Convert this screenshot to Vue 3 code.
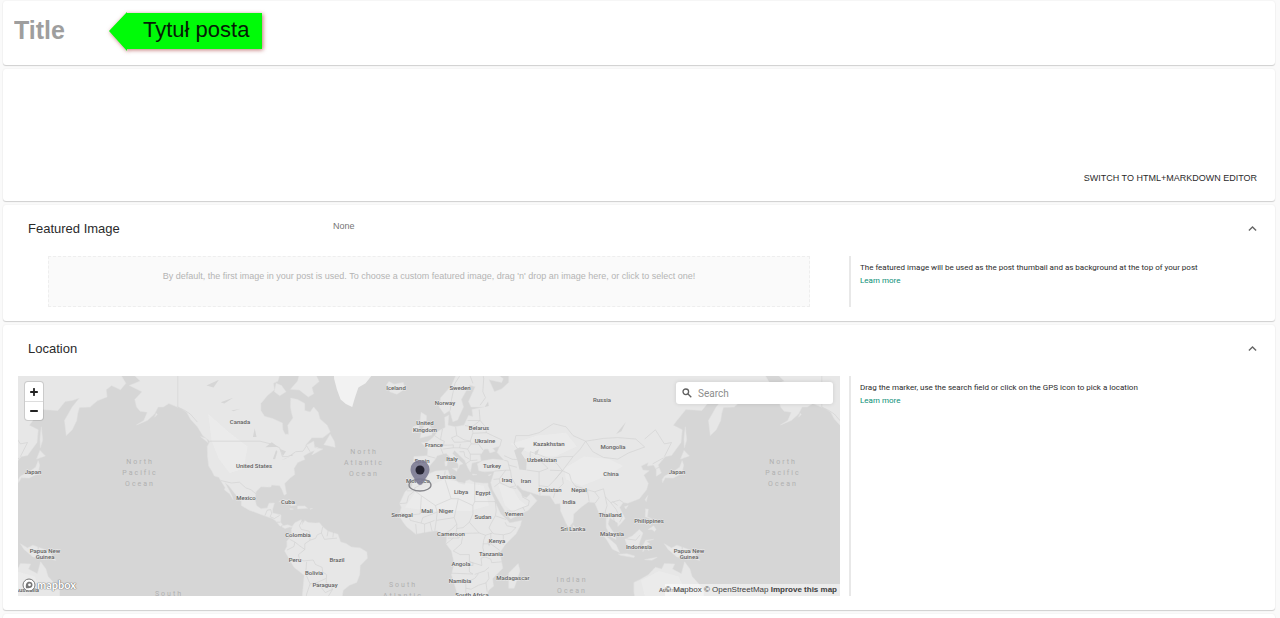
<script setup>
import { ref } from 'vue'

const title = ref('')
const query = ref('')

// Web Mercator: 644 units for 360 degrees, viewBox origin at the map's top-left corner
const px = (lon) => 412 + lon * 1.789
const py = (lat) => 166 - 102.5 * Math.log(Math.tan(Math.PI / 4 + (lat * Math.PI) / 360))
const toPath = (s, close) =>
  'M' + s.trim().split(/\s+/).map((p) => {
    const [lon, lat] = p.split(',').map(Number)
    return px(lon).toFixed(1) + ' ' + py(lat).toFixed(1)
  }).join('L') + (close ? 'Z' : '')

const land = [
  '-162,72 -166,68 -162,66.5 -168,65.5 -161,64 -165,62 -164,60 -162,58.8 -158,58.5 -160,56 -164,54.6 -158,56 -154,58 -152,60 -149,60 -146,61 -139,59.5 -136,58.5 -134,56.5 -130,54 -127,51 -123,49 -124.5,47 -124.3,43 -123.7,39 -122,37 -120.5,34.6 -118,34 -117,32.5 -114.5,29 -115,28 -112,26 -110,23 -110.7,25 -112.7,28.5 -114.7,31.5 -112.5,30 -109,26 -105.5,22 -105.5,20 -101,17.5 -96,15.8 -92.5,14.5 -88,13 -86,11.5 -84,9 -81,7.5 -78,8.5 -77.5,7.5 -76.8,8.5 -79.5,9.6 -82,9 -83.5,11 -83.3,15 -88,16 -88,18 -87,21.3 -90,21.2 -91,18.7 -94.5,18.3 -97,20 -97.8,23 -97.3,27 -94.5,29.5 -91,29.3 -89,29.3 -88.5,30.4 -84,30 -82.7,28 -81.5,25.3 -80.2,26 -81.3,31 -78,33.8 -75.6,35.3 -76,38 -74,40.5 -70,41.8 -70.7,43.3 -67,44.8 -64.5,45.5 -66,43.7 -60,46 -64.5,46.6 -65,49 -70,47.2 -66,50.2 -60,50.2 -55.8,52.2 -57.5,54.5 -61.5,56.5 -62.5,58.5 -65,60 -67,58.6 -70,59 -70,61 -74,62 -77.8,62.4 -78,60 -77.5,58.5 -76.6,56.8 -79.5,54.5 -79,51.5 -81,51.5 -82.2,53 -82.5,55.2 -88,56.6 -92.5,57.3 -94.5,59 -94.5,61 -91,63 -87,64.5 -87.5,66 -85,66.5 -83,69 -82,72',
  '-62,66.4 -66,65 -65,63.5 -68,62.7 -73,64.4 -78,64.6 -74,66.5 -73,68 -77,70 -80,72 -68,71',
  '-80.5,64 -84,63 -87,64 -86,66 -83,65.5',
  '-59.3,47.7 -53,46.7 -53.5,49 -55.8,51.5',
  '-64,46.8 -62,46.3 -62.5,46.1',
  '-124,48.4 -128.2,50.6 -125,50',
  '-154,57 -152.5,57.8 -153,58.2',
  '-22.5,64 -18.5,63.4 -14,64.7 -15,66.2 -20,65.8 -23,66.4 -24.3,65.6 -22,65',
  '-84.5,22 -82,23.1 -77,21.8 -74.5,20.2 -77.5,19.9 -80,21.8',
  '-74,19.8 -70,19.8 -68.5,18.5 -74,18.2',
  '-78.3,18.4 -76.3,18.1 -78,17.8',
  '-67,18.4 -65.6,18.4 -67,18',
  '-77.5,8 -75.5,10.7 -72,12.3 -71.3,11 -71.6,9.5 -70,12 -68,10.8 -64,10.5 -61.8,10.7 -60,8.5 -57,6 -51.5,4.3 -50,0 -47,-.8 -44,-2.8 -39,-3.3 -35.3,-5.5 -35,-9 -39,-13 -39.3,-18 -41,-22 -45,-23.5 -48.5,-26 -49,-29 -52,-33 -56,-34.8 -62,-39 -73.5,-39 -71.5,-30 -70.3,-18.3 -76,-14 -79.5,-8 -81.3,-5 -80,-2.5 -80,.5 -77.5,3 -77.4,6',
  '-6,35.8 -2,35.1 3,36.8 10,37.3 11,35 10,34 15,32.3 16,31.2 19.5,30.5 20,32.3 22,32.8 25,31.6 30,31.2 32.5,31.2 32.5,29.8 35.5,24 37.3,20 39.5,15.5 43.2,12.2 44.5,10.6 51.2,11.9 50.5,9 48,4.5 42,-1.5 39,-6 40.7,-14.5 35,-20 35.5,-24 32.8,-26 31,-30 26,-34 20,-34.8 18,-32 15,-27 12,-18 13.5,-12 12,-5 9,-1 9.5,3.8 6,4.3 4,6.3 1,6 -4,5.2 -8,4.4 -13,8.5 -15,11 -17.3,14.7 -16,19 -17,21 -14,27 -10,30 -9.5,32.5',
  '49.3,-12 50.3,-16 47,-25 44,-25 44,-17',
  '-9,43 -1.5,43.4 -1.2,46 -4.7,48.4 -1.5,48.7 1.5,50.2 4.5,52.5 8.5,53.8 8.2,57 10.5,57.6 10,54.5 14,54 19,54.5 21.5,57.5 24,57.2 23.5,59.3 30,60 23,60 21.5,61.5 25.3,65.2 22,65.6 17.5,62 18.7,60 16.5,57.5 15.5,56.2 12.8,55.6 11,59 8,58 5.2,60 6,62.5 12,65.5 16,69 25,71 33,69.3 41,67 40,66.2 33,66.8 36,64 40,64.7 44,66.2 44,68.5 54,68.5 60,69 68,69 68,72 180,72 190,66 187,64.5 182,65.5 179,64.5 179.5,62.7 174,61.7 170,60 164,59.9 163,58 162.5,56 160,53 156.7,51 155.7,56 160,60 164,62.4 160,61.8 156,61.5 152,59 143,59.3 138,56 136,54.5 141,53 140.3,48.5 135,43.5 131.5,43 127.5,39.5 129.3,36 126.5,34.5 126.5,37.5 125,39.5 121.5,39 122,40.5 118,39 119,37.3 122.5,37 119.5,35 122,31 121,28 117,23.5 110.5,21.2 108,21.6 106,19 109,13 107,10.5 105,8.7 105,10.5 102,12.5 100.5,13.5 99.5,10 103.3,4 104,1.4 101,3 98.5,8 98.5,13 97.5,16.5 94.5,16 92,21.5 88.5,21.8 85,19.5 80.3,15.5 80,11 77.5,8 76,10.5 73,17 72.7,21 70,20.8 67,25 61.5,25.2 57,26.5 51.5,28 49,30.3 48,29.5 51,26 51.5,24.6 54,24 56.3,26 59.8,22.5 55,17.5 45,12.8 42.8,15.5 39,21.5 35,28 34,31.5 36,36.8 30.5,36.5 27.3,37 26.5,40 29,41.2 35,42 41.5,41.5 37.5,44.7 39,47.2 35,46.3 36.5,45.2 33.5,44.5 32.5,46 30.5,46 28,43.5 28.5,41.2 26,40.8 23.5,40.3 23,38 22.5,36.5 21,38.5 19.4,41.5 13.7,45.5 12.5,44.3 16,41.7 18.5,40 16.5,39.5 16,38 15.7,40 12,42 9,44.4 4,43.4 3,42 -.3,39 -2,36.8 -5.5,36.1 -9,37 -9.2,39',
  '-5.5,50.1 1,51.2 1.5,52.8 -2,56 -2,57.5 -5,58.5 -5.5,56 -3,54.5 -4.5,53 -5,51.8',
  '-10,52 -6.2,52.3 -6,54.8 -9.5,54',
  '12.5,38 15.5,38.2 15,36.7',
  '8.3,41 9.7,41 9.5,39.2 8.5,39',
  '23.7,35.5 26.2,35.2 24,35',
  '32.4,34.9 34.3,35.5 33.5,34.7',
  '130,31.5 131.5,33.8 136,33.6 140.8,35.7 141.8,39.5 141,41.3 139.5,38.5 136.5,36.8 131,34.5 129.8,33',
  '140,42 145,43.3 142,45.5',
  '142.2,46.5 143.5,49.5 142.7,54 142,50',
  '120.5,18.3 122,18 121.5,14 124,12.8 120.3,14',
  '122,7 125,9 126.4,7 125.5,5.8 124,7',
  '123,11 124.6,11.2 123,9.3',
  '120.2,23 121.7,25.1 120.9,22',
  '108.7,19.3 110.8,20 109.5,18.2',
  '80,9.5 81.8,7 80.2,6',
  '109,1.5 113,3.3 117,7 119,5 117.5,.8 116,-4 110.5,-2.8',
  '95.3,5.5 100,2 104,-1.5 106,-5.8 102,-4 98.5,1.7',
  '105.3,-6.8 110,-6.5 114.5,-7.8 114,-8.7 106.5,-7.4',
  '119,-5.5 119,-2 120.5,1 125,1.5 121,.3 123,-1 121.2,-2 122.5,-5 120.5,-3',
  '120,-9.8 127,-8.5 124,-10.2',
  '131,-1 135,-3.3 138,-1.8 145,-4.3 147.5,-6 150.8,-10.3 146,-8.8 143,-9.2 138,-8.3 133,-4',
  '148.5,-5.8 152,-4.2 151,-6.2',
  '114,-22 117,-20.7 122,-18 126,-14 129.5,-15 131,-12 136.8,-12.2 135.5,-15 140.5,-17.5 142.3,-11 145.3,-15 146.5,-19 150,-22.5 153,-26 153,-31 151,-34 147,-38 140,-38 135,-34.5 131,-31.5 124,-33 115.5,-34 114,-27'
].map((s) => toPath(s, true)).join('')

const ice = toPath('-54,71 -53.6,67 -52,64.5 -50,62 -47,60.8 -43.5,60 -42,62.5 -40,65 -36,66 -32,68 -25,70 -25,72', true)

const lakes = [
  '47,45.5 50,46.6 53,46.5 51,44.5 54,41 53.8,37.2 50,37.5 49,41',
  '58.5,45 61,46 60,44 58.7,43.7',
  '-92,46.7 -88.5,48.6 -84.8,46.8 -88,46.8',
  '-87.8,42 -86,45.7 -85.3,45 -86.6,41.9',
  '-84,46 -80.5,45.2 -82.2,43.2',
  '-83,41.6 -79,42.8 -81,42',
  '-79.5,43.3 -76.3,44 -77,43.3',
  '-99,50.5 -97,50.5 -98,53.5',
  '-117,61.3 -110,62.5 -115,61',
  '-125,65.5 -118,66.8 -121,65',
  '-111,59 -106,59.5 -110,58.8',
  '32,.3 34.2,.2 33,-2.5',
  '104,51.6 109.5,55.5 107,52.5',
  '30.5,60 32.5,61.5 32.8,60.3'
].map((s) => toPath(s, true)).join('')

const shades = [
  '-124,58 -112,52 -102,47 -104,38 -112,36 -118,42 -122,49',
  '-8,27 8,33 30,30 33,20 22,17 0,17 -14,19',
  '38,31 46,29 50,23 54,20 47,16 42,20',
  '75,38 86,43 100,42 108,39 100,35 85,30 76,33',
  '45,48 60,51 76,52 82,47 70,43 60,43',
  '118,-21 128,-16 139,-19 142,-25 132,-29 120,-29'
].map((s) => toPath(s, true)).join('')

const borders = [
  '-123,49 -95,49 -89,48 -84,46.5 -82.5,43 -79,43 -75,45 -71,45.2 -69,47.3 -67,45',
  '-141,72 -141,60 -137,59 -134,58 -130,55.5',
  '-117,32.5 -111,31.3 -106.5,31.7 -103,29 -100,28 -97.3,26',
  '-92.3,14.6 -91,17.5 -89,17.8 -88.5,15.8 -89.4,14 -87,13 -84,14.7',
  '-85.5,11 -83.7,11', '-83,8.2 -82.6,9.5',
  '-77.3,8 -77.8,7.2', '-71.5,12 -73,9 -72,7 -67.5,6 -67,1 -70,-1 -70,-4.2 -73,-2 -75.5,0 -78.5,1.5',
  '-75.5,0 -76,-2.5 -80,-4.5', '-70,-4.2 -73.5,-7 -73,-9.5 -70.5,-10.5 -65.3,-10 -64,-12.5 -60.3,-14 -60,-16.5 -57.8,-18 -58,-22 -55.5,-23.5 -54.5,-25.6 -57.5,-30 -53.5,-33.5',
  '-69,-11 -69.5,-17.5 -67,-22.8 -63,-22 -58.2,-20', '-63,-22 -58.5,-27.2 -54.6,-25.6',
  '-67,-22.8 -69,-28 -70,-34', '-67,1 -64,2 -63,4 -60.7,5 -60,8.5', '-60.7,5 -59,1.5 -52,2.2', '-57,6 -57.5,3.2', '-54,5.5 -54.3,2.5',
  '-2,35 -1.5,32 -8.5,29 -8.5,27.5 -12.8,27.5', '-8.5,27.5 -4.8,25 3,20 11.8,23.5 9.5,30 8,34 8.5,37',
  '11.8,23.5 15.8,23.5 24,20 25,22 25,31.6', '25,22 36.5,22', '24,20 24,15.5 22,11 24,8.8 27.5,5 31,3.8 35,5 36,4.5',
  '3,20 4,16.5 0,15 -4,13.5 -5,10.5 -11,12 -12,14.8 -16.3,16', '-12,14.8 -5.5,15.5 -4.8,25', '-17,21 -13,21.3 -12,25 -8.5,27.5',
  '4,16.5 3.5,12 13.5,13.5 15.8,23.5', '13.5,13.5 15,10 12,7 8.5,4.8', '3.5,12 2.7,6.3', '0,11 1.2,6', '-3,10 -3,5', '-8,10 -7.5,4.5', '-5,10.5 -3,10 0,11 2.5,12',
  '15,10 15,7.5 18.5,8 22,11', '15,7.5 14.5,4.5 16,2.2 18.5,4.8 27.5,5', '10,2.2 16,2.2', '18.5,4.8 17.5,-1 13,-5 16.8,-7 22,-7 22,-11 24,-11.5 24,-13 22,-13 22,-16.5 24,-17.6 12,-17.2',
  '9,-1 13,2.2', '22,-11 29,-13 28.5,-9 30.7,-8.3 29.5,-3 30,1 31,3.8', '30.7,-8.3 34,-9.5 34.5,-11.5 40,-11', '29.5,-1 34,-1 39,-4.7', '34,5 34,-1',
  '25,-17.8 30.5,-16 33,-14', '27,-17.5 25,-20 20,-22 20,-28.5 17,-28.5', '20,-25 23,-25.5 27,-23.5 31.3,-22.3 33,-20 32.5,-16.5', '31.3,-22.3 32,-26.8',
  '36.5,22 37,17 36.5,14.5 42.5,12.5', '36.5,14.5 34,10 33,7.8 35,5', '42,11 43,9 48,8 45,5 41,4 36,4.5', '41,4 41,-1.5',
  '-1.5,43.3 3,42.4', '-7,41.8 -7,37.2', '2.5,51 6,49.5 8,49 7.5,47.5 6,46.5 7.5,43.8', '7.5,47.5 10,47.5 13,47.6 13,46.5 7,46', '7,53.3 6,50 6,49.5',
  '14.3,54 15,51 12,50.2 13.5,48.6 17,48.6 22.5,49 24,52 23.5,54 19.5,54.4', '15,51 19,49.5 22.5,49', '13,46.5 16.5,46.5 17,48', '16.5,46.5 21,46 23,48 22.5,49', '23.5,54 28,56 27.5,59.3', '21,56 28,56 31,54 31.5,52 24,51.8', '31.5,52 35,51 40,49.5 39,47', '21,46 22.5,44 28.5,44', '22.5,44 22.5,41.3 26.5,41.6', '22.5,41.3 20,40', '16.5,45 19,45 19.5,43 22,42', '23,48 27,48 29.8,45.5',
  '11.3,59 12,62 14,66 19,69 29,69.5 30,67 29.5,64 31,62.5 28,60.5', '21,69 24,66',
  '36,36.8 42.3,37.2 44.8,37.2 44,39.5 43.5,41.2 41.5,41.5', '41.5,43.4 46,41.9 48.5,41.8', '44,39.5 48.5,38.5', '35.5,33 38.8,33.3 42.3,37.2', '38.8,33.3 39,31.5 36,29.5', '39,31.5 44.5,29.2 48,30 45.5,34 45,37.2', '44.5,29.2 48.2,28.6', '43,17 47,17 52,19 55,20 55.5,22.5 51.5,24.5', '52,19 53,17',
  '49,46 47,48 48,51 55,51 61,52 69,55 76,54 80,51 87,49 84,46 80,43 74,43 67,42 62,43.5 56,45 56,41.5 52.5,42', '87,49 97,50 105,50.3 115,49.8 120,46.8 111,44.5 105,42 97,42.7 91,45 87,49',
  '56,41.5 62,41 66,38 61,36.5 54,37.3', '61,36.5 61,30 66,29.5 70,33 74,37 67,37.2', '61,30 61.5,25.2', '67,42 71,40 73,38 74,37 80,43', '70,33 74,37 78,35.5 79,32.5 81,30 88,28 92,27 97,28.5 98,24.5 101,21.5 106,22.8 108,21.6', '74,34 74.5,31 70,27 69,24', '81,30 84,27 88,26.5', '88,28 89,22', '92,27 94.5,24 92.3,21.2', '98,24.5 99,20 98,17 99,13', '101,21.5 104,18 105.5,15 102.5,14.3 103,11', '105.5,15 107.5,14 106,11', '102,22 105,20', '120,49.8 126,53 131,48 135,48.5 131,43', '124.5,40 130.5,42.5', '126.5,38 128.3,38.5', '109.7,1.8 115,1 117.5,4', '141,-2.5 141,-9'
].map((s) => toPath(s, false)).join('')

const labels = [
  [222, 46, 'Canada'], [236, 90, 'United States'], [228, 122, 'Mexico'], [270, 126, 'Cuba'], [280, 159, 'Colombia'],
  [277, 184, 'Peru'], [319, 184, 'Brazil'], [296, 197, 'Bolivia'], [307, 209, 'Paraguay'], [378, 12, 'Iceland'],
  [442, 12, 'Sweden'], [427, 27, 'Norway'], [407, 47, 'United'], [407, 54, 'Kingdom'], [461, 52, 'Belarus'],
  [467, 65, 'Ukraine'], [416, 69, 'France'], [434, 83, 'Italy'], [404, 85, 'Spain'], [474, 90, 'Turkey'],
  [428, 101, 'Tunisia'], [400, 105, 'Morocco'], [489, 104, 'Iraq'], [508, 105, 'Iran'], [532, 114, 'Pakistan'],
  [561, 114, 'Nepal'], [551, 126, 'India'], [443, 116, 'Libya'], [465, 117, 'Egypt'], [465, 141, 'Sudan'],
  [409, 135, 'Mali'], [428, 135, 'Niger'], [384, 139, 'Senegal'], [496, 138, 'Yemen'], [433, 158, 'Cameroon'],
  [479, 165, 'Kenya'], [473, 178, 'Tanzania'], [443, 188, 'Angola'], [442, 205, 'Namibia'], [454, 219, 'South Africa'],
  [495, 202, 'Madagascar'], [555, 153, 'Sri Lanka'], [531, 68, 'Kazakhstan'], [524, 84, 'Uzbekistan'], [584, 24, 'Russia'],
  [595, 71, 'Mongolia'], [593, 98, 'China'], [592, 139, 'Thailand'], [594, 158, 'Malaysia'], [621, 171, 'Indonesia'],
  [631, 145, 'Philippines'], [659, 96, 'Japan'], [671, 175, 'Papua New'], [671, 181, 'Guinea'], [653, 214, 'Australia'],
  [15, 96, 'Japan'], [27, 175, 'Papua New'], [27, 181, 'Guinea'], [9, 214, 'Australia']
]

const oceans = [
  [122, 86, ['North', 'Pacific', 'Ocean']], [765, 86, ['North', 'Pacific', 'Ocean']],
  [346, 76, ['North', 'Atlantic', 'Ocean']], [385, 209, ['South', 'Atlantic']],
  [554, 204, ['Indian', 'Ocean']], [151, 218, ['South']]
]
</script>

<template>
  <main class="page">
    <section class="card title-card">
      <input v-model="title" class="title" type="text" placeholder="Title" aria-label="Title" />
      <div class="callout">
        <svg class="callout-shape" viewBox="0 0 154 40" preserveAspectRatio="none" aria-hidden="true">
          <path d="M0 20L18 1V2H153V38H18V40Z" fill="#00fb08" />
        </svg>
        <span>Tytuł posta</span>
      </div>
    </section>

    <section class="card editor">
      <button class="switch" type="button">SWITCH TO HTML+MARKDOWN EDITOR</button>
    </section>

    <section class="card">
      <header class="head">
        <h2>Featured Image</h2>
        <span class="value">None</span>
        <button class="toggle" type="button" aria-label="Collapse featured image">
          <svg viewBox="0 0 8 6"><path d="M.8 4.9L4 1.7l3.2 3.2" /></svg>
        </button>
      </header>
      <div class="body image-body">
        <div class="main drop-wrap">
          <button class="drop" type="button">By default, the first image in your post is used. To choose a custom featured image, drag 'n' drop an image here, or click to select one!</button>
        </div>
        <aside class="help">
          <p>The featured image will be used as the post thumbail and as background at the top of your post</p>
          <a href="#">Learn more</a>
        </aside>
      </div>
    </section>

    <section class="card">
      <header class="head">
        <h2>Location</h2>
        <span class="value"></span>
        <button class="toggle" type="button" aria-label="Collapse location">
          <svg viewBox="0 0 8 6"><path d="M.8 4.9L4 1.7l3.2 3.2" /></svg>
        </button>
      </header>
      <div class="body map-body">
        <div class="main map">
          <svg class="world" viewBox="0 0 822 220" preserveAspectRatio="xMidYMid slice" role="img" aria-label="World map">
            <defs>
              <g id="world">
                <path class="land" :d="land" />
                <path class="ice" :d="ice" />
                <path class="shade" :d="shades" />
                <path class="borders" :d="borders" />
                <path class="lake" :d="lakes" />
              </g>
            </defs>
            <use href="#world" x="-644" /><use href="#world" /><use href="#world" x="644" />
            <g v-for="(o, i) in oceans" :key="'o' + i" class="ocean">
              <text v-for="(line, j) in o[2]" :key="j" :x="o[0]" :y="o[1] + j * 11 + 2">{{ line }}</text>
            </g>
            <text v-for="(l, i) in labels" :key="i" class="label" :x="l[0]" :y="l[1] + 2">{{ l[2] }}</text>
            <ellipse cx="402" cy="109" rx="11" ry="6" fill="none" stroke="#85858a" stroke-width="1.3" />
            <path d="M402 84a9.5 9.5 0 0 1 9.5 9.5c0 5-4 8.5-6.5 13.5q-3 4-6 0c-2.5-5-6.500-8.500-6.500-13.500a9.500 9.500 0 0 1 9.500-9.500z" fill="#7c7b93" fill-opacity=".9" />
            <circle cx="402" cy="94" r="4.500" fill="#252432" />
          </svg>
          <div class="zoom">
            <button type="button" aria-label="Zoom in"><svg viewBox="0 0 8 8"><path d="M4 .8v6.400M.8 4h6.400" /></svg></button>
            <button type="button" aria-label="Zoom out"><svg viewBox="0 0 8 8"><path d="M.8 4h6.400" /></svg></button>
          </div>
          <label class="search">
            <svg viewBox="0 0 10 10"><circle cx="3.800" cy="3.800" r="2.800" /><path d="M6 6l3.300 3.300" /></svg>
            <input v-model="query" type="text" placeholder="Search" aria-label="Search" />
          </label>
          <a class="logo" href="#" aria-label="Mapbox">
            <svg viewBox="0 0 14 14">
              <circle cx="7" cy="7" r="6" fill="#fff" stroke="#777" />
              <path d="M4 10.200c-.7-3.800.6-6.400 3.300-6.400a3.100 3.100 0 0 1 .2 6.200c-1.300.3-2.400.4-3.500.2z" fill="#777" />
              <circle cx="7.500" cy="6.800" r="1.400" fill="#fff" />
            </svg>
            <span>mapbox</span>
          </a>
          <div class="credits">
            <a href="#">© Mapbox</a> <a href="#">© OpenStreetMap</a> <a href="#"><b>Improve this map</b></a>
          </div>
        </div>
        <aside class="help">
          <p>Drag the marker, use the search field or click on the GPS icon to pick a location</p>
          <a href="#">Learn more</a>
        </aside>
      </div>
    </section>
    <section class="card next" aria-hidden="true"></section>
  </main>
</template>

<style>
body { margin: 0; background: #fafafa; overflow: hidden; }
</style>

<style scoped>
* { box-sizing: border-box; }
.page {
  display: flex;
  flex-direction: column;
  gap: 4px;
  padding: 1px 5px 0 3px;
  font-family: "Liberation Sans", Arial, sans-serif;
  color: #2b2b2b;
}
button, input { font: inherit; color: inherit; border: 0; background: none; padding: 0; margin: 0; }
button { cursor: pointer; }
a { text-decoration: none; color: inherit; }
.card {
  background: #fff;
  border-radius: 3px;
  box-shadow: 0 1px 1px rgba(0, 0, 0, .16), 0 0 2px rgba(0, 0, 0, .07);
}
.title-card { display: flex; align-items: flex-start; padding: 10px 11px 14px; }
.title { width: 95px; height: 39px; font-size: 25px; font-weight: 700; outline: 0; }
.title::placeholder { color: #9e9e9e; opacity: 1; }
.callout { position: relative; width: 154px; height: 40px; font-size: 22px; line-height: 38px; padding-left: 34px; color: #061a06; white-space: nowrap; }
.callout span { position: relative; }
.callout-shape { position: absolute; inset: 0; width: 100%; height: 100%; overflow: visible; filter: drop-shadow(1px 1px 2px rgba(150, 20, 20, .6)); }
.editor { display: flex; justify-content: flex-end; align-items: flex-end; min-height: 132px; padding: 0 18px 16px; }
.switch { font-size: 9px; line-height: 14px; }
.head { display: flex; align-items: flex-start; padding: 13px 18px 0 25px; }
.head h2 { margin: 0; width: 305px; font-size: 13px; line-height: 21px; font-weight: 400; }
.value { flex: 1; font-size: 9px; line-height: 16px; color: #757575; }
.toggle { width: 9px; height: 21px; display: flex; align-items: center; }
.toggle svg { width: 9px; fill: none; stroke: #666; stroke-width: 1.2; }
.body { display: grid; grid-template-columns: 822fr 426fr; column-gap: 9px; padding: 17px 0 14px 15px; }
.drop-wrap { padding: 0 30px; }
.drop { display: block; width: 100%; min-height: 51px; padding-bottom: 12px; border: 1px dashed #eee; background: #fafafa; color: #b4b4b4; font-size: 9px; }
.help { border-left: 2px solid #e8e8e8; padding: 5px 9px; font-family: Roboto, sans-serif; font-size: 8px; line-height: 13px; }
.help p { margin: 0; }
.help a { display: block; color: #0b8f77; }
.map { position: relative; height: 220px; overflow: hidden; background: #d6d6d6; }
.world { display: block; width: 100%; height: 100%; }
.land { fill: #e7e7e7; stroke: #e2e2e2; stroke-width: .5; stroke-linejoin: round; }
.ice { fill: #f2f2f2; }
.shade { fill: #f2f2f2; opacity: .4; }
.borders { fill: none; stroke: #d0d0d0; stroke-width: .6; }
.lake { fill: #d6d6d6; }
.label { font: 500 6px Roboto, sans-serif; fill: #606060; text-anchor: middle; paint-order: stroke; stroke: #ececec; stroke-width: .8; }
.ocean { font: 7px Roboto, sans-serif; fill: #b0b0b0; text-anchor: middle; letter-spacing: 2px; }
.zoom { position: absolute; left: 7px; top: 6px; width: 18px; border-radius: 3px; background: #fff; box-shadow: 0 0 0 1px rgba(0, 0, 0, .12); }
.zoom button { display: flex; align-items: center; justify-content: center; width: 18px; height: 19px; }
.zoom button + button { border-top: 1px solid #ddd; }
.zoom svg { width: 8px; height: 8px; stroke: #222; stroke-width: 1.8; stroke-linecap: round; }
.search { position: absolute; right: 7px; top: 6px; width: 157px; height: 22px; display: flex; align-items: center; gap: 6px; padding: 0 6px; border-radius: 3px; background: #fff; box-shadow: 0 0 4px rgba(0, 0, 0, .12); }
.search svg { width: 10px; height: 10px; flex: none; fill: none; stroke: #606060; stroke-width: 1.3; }
.search input { flex: 1; min-width: 0; font: 10px Roboto, sans-serif; outline: 0; }
.search input::placeholder { color: #8c8c8c; opacity: 1; }
.logo { position: absolute; left: 4px; bottom: 4px; display: flex; align-items: center; gap: 1px; font: 700 11px/14px Lato, sans-serif; color: #fff; text-shadow: 0 0 1px #777, 0 0 1px #777, 0 0 1px #777; }
.logo svg { width: 14px; height: 14px; }
.credits { position: absolute; right: 0; bottom: 0; padding: 0 3px 0 0; font-size: 8px; line-height: 12px; color: #404040; background: rgba(255, 255, 255, .5); }
.next { height: 12px; }
</style>
